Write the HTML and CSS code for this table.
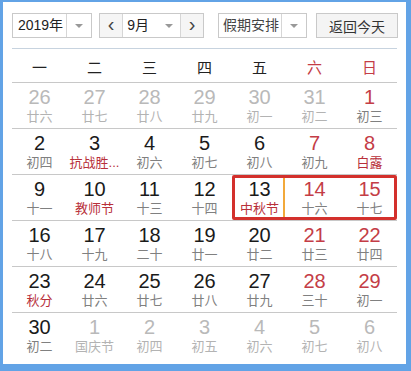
FILE: index.html
```html
<!DOCTYPE html>
<html lang="zh">
<head>
<meta charset="utf-8">
<link rel="stylesheet" href="styles.css">
</head>
<body>
<div class="frame">
  <div class="toolbar">
    <div class="ctl sel year"><span class="val">2019年</span><span class="arr"><i></i></span></div>
    <div class="ctl month">
      <span class="btn">&lsaquo;</span>
      <span class="mval">9月</span><span class="marr"><i></i></span>
      <span class="btn right">&rsaquo;</span>
    </div>
    <div class="ctl sel holiday"><span class="val">假期安排</span><span class="arr"><i></i></span></div>
    <div class="ctl today">返回今天</div>
  </div>
  <div class="cal">
    <div class="week">
      <span>一</span><span>二</span><span>三</span><span>四</span><span>五</span><span class="red">六</span><span class="red">日</span>
    </div>
    <div class="row">
      <div class="cell out"><b>26</b><small>廿六</small></div>
      <div class="cell out"><b>27</b><small>廿七</small></div>
      <div class="cell out"><b>28</b><small>廿八</small></div>
      <div class="cell out"><b>29</b><small>廿九</small></div>
      <div class="cell out"><b>30</b><small>初一</small></div>
      <div class="cell out"><b>31</b><small>初二</small></div>
      <div class="cell wk"><b>1</b><small>初三</small></div>
    </div>
    <div class="row">
      <div class="cell"><b>2</b><small>初四</small></div>
      <div class="cell"><b>3</b><small class="fest">抗战胜...</small></div>
      <div class="cell"><b>4</b><small>初六</small></div>
      <div class="cell"><b>5</b><small>初七</small></div>
      <div class="cell"><b>6</b><small>初八</small></div>
      <div class="cell wk"><b>7</b><small>初九</small></div>
      <div class="cell wk"><b>8</b><small class="fest">白露</small></div>
    </div>
    <div class="row marked">
      <div class="cell"><b>9</b><small>十一</small></div>
      <div class="cell"><b>10</b><small class="fest">教师节</small></div>
      <div class="cell"><b>11</b><small>十三</small></div>
      <div class="cell"><b>12</b><small>十四</small></div>
      <div class="cell sel13"><b>13</b><small class="fest">中秋节</small></div>
      <div class="cell wk"><b>14</b><small>十六</small></div>
      <div class="cell wk"><b>15</b><small>十七</small></div>
      <div class="box"></div>
    </div>
    <div class="row">
      <div class="cell"><b>16</b><small>十八</small></div>
      <div class="cell"><b>17</b><small>十九</small></div>
      <div class="cell"><b>18</b><small>二十</small></div>
      <div class="cell"><b>19</b><small>廿一</small></div>
      <div class="cell"><b>20</b><small>廿二</small></div>
      <div class="cell wk"><b>21</b><small>廿三</small></div>
      <div class="cell wk"><b>22</b><small>廿四</small></div>
    </div>
    <div class="row">
      <div class="cell"><b>23</b><small class="fest">秋分</small></div>
      <div class="cell"><b>24</b><small>廿六</small></div>
      <div class="cell"><b>25</b><small>廿七</small></div>
      <div class="cell"><b>26</b><small>廿八</small></div>
      <div class="cell"><b>27</b><small>廿九</small></div>
      <div class="cell wk"><b>28</b><small>三十</small></div>
      <div class="cell wk"><b>29</b><small>初一</small></div>
    </div>
    <div class="row last">
      <div class="cell"><b>30</b><small>初二</small></div>
      <div class="cell out"><b>1</b><small>国庆节</small></div>
      <div class="cell out"><b>2</b><small>初四</small></div>
      <div class="cell out"><b>3</b><small>初五</small></div>
      <div class="cell out"><b>4</b><small>初六</small></div>
      <div class="cell out"><b>5</b><small>初七</small></div>
      <div class="cell out"><b>6</b><small>初八</small></div>
    </div>
  </div>
</div>
</body>
</html>
```

FILE: styles.css
```css
* { box-sizing: border-box; }
html, body { margin: 0; padding: 0; background: #fff; }
body {
  font-family: "Liberation Sans", "Noto Sans CJK SC", sans-serif;
  color: #1a1a1a;
}
.frame {
  width: 411px;
  height: 371px;
  border-style: solid;
  border-color: #62a3e6;
  border-width: 2px 5px 7px 3px;
  padding: 10px 9px 0 9px;
  background: #fff;
  overflow: hidden;
}
.toolbar {
  display: flex;
  align-items: center;
  height: 26px;
  padding-top: 1px;
  white-space: nowrap;
}
.ctl {
  height: 25px;
  border: 1px solid #c9c9c9;
  background: #fff;
  display: flex;
  align-items: center;
  font-size: 14px;
  color: #222;
  flex: none;
}
.sel .val {
  flex: 1;
  text-align: center;
  line-height: 23px;
}
.sel .arr {
  width: 25px;
  height: 23px;
  border-left: 1px solid #d6d6d6;
  display: flex;
  align-items: center;
  justify-content: center;
}
.sel .arr i, .marr i {
  width: 0; height: 0;
  border-left: 4px solid transparent;
  border-right: 4px solid transparent;
  border-top: 4px solid #999;
  display: block;
}
.year { width: 80px; }
.year .val { padding-left: 2px; }
.month { width: 105px; margin-left: 7px; }
.month .btn {
  width: 23px;
  height: 23px;
  background: #f5f5f5;
  border-right: 1px solid #d6d6d6;
  text-align: center;
  line-height: 21px;
  font-size: 20px;
  color: #444;
}
.month .btn.right { border-right: 0; border-left: 1px solid #d6d6d6; }
.month .mval {
  flex: 1;
  text-align: right;
  padding-right: 9px;
  line-height: 23px;
}
.month .marr {
  width: 22px;
  display: flex;
  justify-content: center;
}
.holiday { width: 89px; margin-left: 14px; }
.holiday .val { color: #444; padding-left: 2px; }
.holiday .arr { width: 25px; }
.today {
  width: 82px;
  margin-left: 9px;
  justify-content: center;
  background: #f4f4f4;
  color: #333;
}
.cal {
  margin-top: 10px;
  border-top: 1px solid #c7d3df;
}
.week {
  display: grid;
  grid-template-columns: repeat(7, 55px);
  height: 34px;
  border-bottom: 1px solid #c8c8c8;
  align-items: center;
  text-align: center;
  font-size: 15px;
  color: #222;
}
.week span { padding-top: 1px; }
.week .red { color: #c43d46; }
.row {
  display: grid;
  grid-template-columns: repeat(7, 55px);
  height: 46px;
  border-bottom: 1px solid #c8c8c8;
  position: relative;
}
.row.last { border-bottom: 0; }
.cell {
  display: flex;
  flex-direction: column;
  align-items: center;
  padding-top: 3px;
  position: relative;
}
.cell b {
  font-weight: normal;
  font-size: 20px;
  line-height: 22px;
  color: #1a1a1a;
}
.cell small {
  font-size: 13px;
  line-height: 17px;
  color: #808080;
  white-space: nowrap;
}
.cell.wk b { color: #c43d46; }
.cell .fest { color: #b8303a; }
.cell.out b { color: #b9b9b9; }
.cell.out small { color: #b3b3b3; }
.sel13::after {
  content: "";
  position: absolute;
  right: 2px;
  top: 2px;
  bottom: 2px;
  width: 2px;
  background: #f2a93b;
}
.box {
  position: absolute;
  left: 220px;
  top: 0;
  width: 165px;
  height: 45px;
  border: 3px solid #d3302c;
  border-radius: 2px;
}
```
